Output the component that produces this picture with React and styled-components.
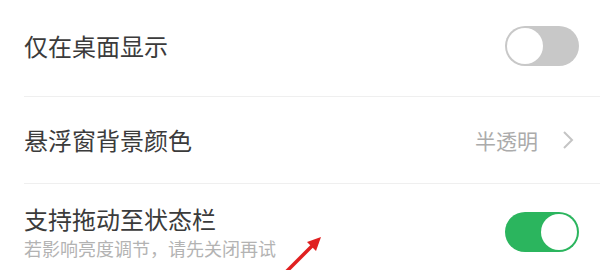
import React from "react";
import styled, { createGlobalStyle } from "styled-components";

const GlobalStyle = createGlobalStyle`
	html, body {
		margin: 0;
		padding: 0;
		background: #ffffff;
	}
	body {
		width: 600px;
		height: 270px;
		overflow: hidden;
		font-family: "Noto Sans CJK SC", "Noto Sans", sans-serif;
	}
`;

const Page = styled.div`
	position: relative;
	width: 600px;
	height: 270px;
	overflow: hidden;
	background: #fff;
`;

const List = styled.div`
	display: flex;
	flex-direction: column;
	padding-left: 24px;
`;

const Row = styled.div`
	display: flex;
	align-items: center;
	justify-content: space-between;
	box-sizing: border-box;
	height: ${(p) => p.height}px;
	padding-right: 21px;
	padding-bottom: ${(p) => p.shift || 0}px;
	border-bottom: ${(p) => (p.last ? "none" : "1px solid #efefef")};
`;

const TextBlock = styled.div`
	display: flex;
	flex-direction: column;
	gap: 4px;
`;

const Title = styled.div`
	font-size: 24px;
	line-height: 28px;
	color: #3b3b3b;
`;

const Subtitle = styled.div`
	font-size: 18px;
	line-height: 22px;
	color: #b3b3b3;
`;

const Value = styled.div`
	display: flex;
	align-items: center;
	gap: 24px;
	padding-right: 5px;
	font-size: 21px;
	color: #ababab;
`;

const Track = styled.div`
	position: relative;
	width: 74px;
	height: 40px;
	border-radius: 20px;
	background: ${(p) => (p.on ? "#2bb55e" : "#c8c8c8")};
	flex-shrink: 0;
`;

const Knob = styled.div`
	position: absolute;
	top: 2px;
	left: ${(p) => (p.on ? "36px" : "2px")};
	width: 36px;
	height: 36px;
	border-radius: 50%;
	background: #fff;
`;

const Arrow = styled.svg`
	position: absolute;
	left: 280px;
	top: 230px;
`;

const Toggle = ({ on }) => (
	<Track on={on}>
		<Knob on={on} />
	</Track>
);

const Chevron = () => (
	<svg width="12" height="20" viewBox="0 0 12 20">
		<path d="M2 2 L10 10 L2 18" fill="none" stroke="#c4c4c4" strokeWidth="2" />
	</svg>
);

export default function App() {
	return (
		<Page>
			<GlobalStyle />
			<List>
				<Row height={97} shift={4}>
					<Title>仅在桌面显示</Title>
					<Toggle on={false} />
				</Row>
				<Row height={87}>
					<Title>悬浮窗背景颜色</Title>
					<Value>
						半透明
						<Chevron />
					</Value>
				</Row>
				<Row height={96} last>
					<TextBlock>
						<Title>支持拖动至状态栏</Title>
						<Subtitle>若影响亮度调节，请先关闭再试</Subtitle>
					</TextBlock>
					<Toggle on />
				</Row>
			</List>
			<Arrow width="50" height="40" viewBox="0 0 50 40">
				<line x1="6" y1="42" x2="34" y2="14" stroke="#e02020" strokeWidth="3.5" />
				<polygon points="41,7 27,12 36,21" fill="#e02020" />
			</Arrow>
		</Page>
	);
}
